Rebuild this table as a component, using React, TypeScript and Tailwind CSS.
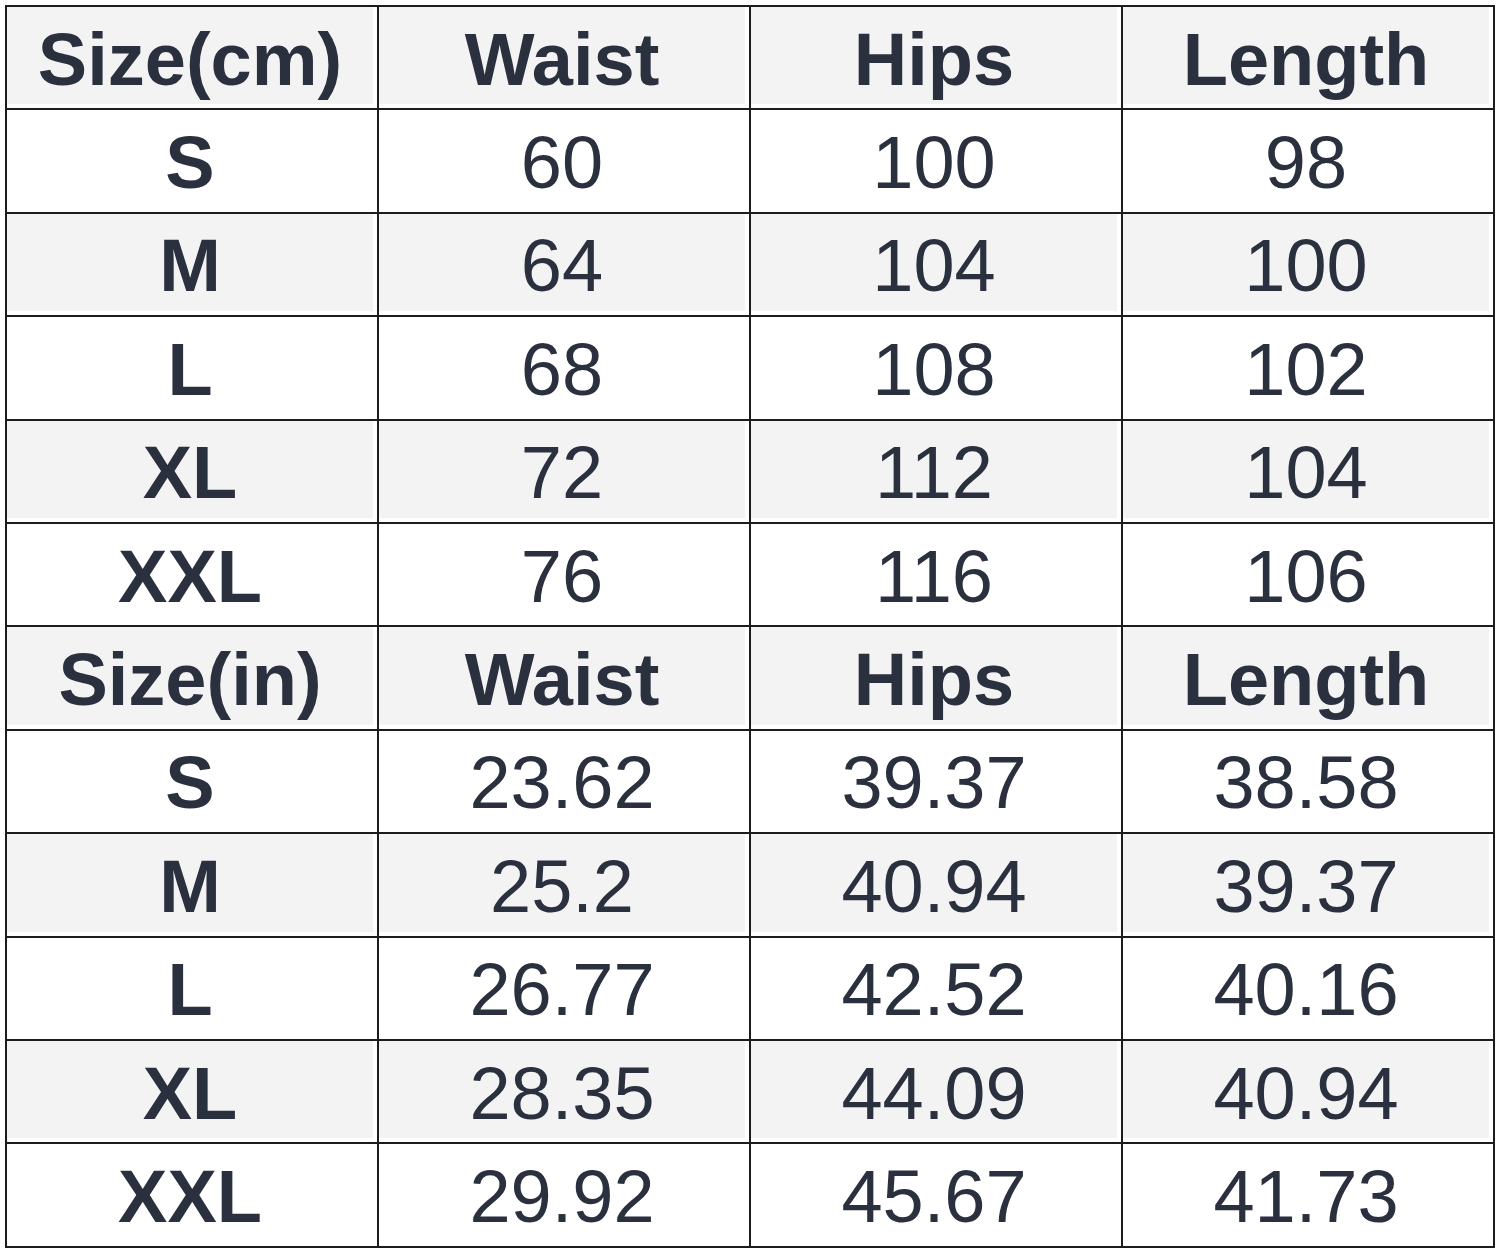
import React from "react";

type Row = { cells: string[]; header?: boolean; gray?: boolean };

const rows: Row[] = [
  { cells: ["Size(cm)", "Waist", "Hips", "Length"], header: true, gray: true },
  { cells: ["S", "60", "100", "98"] },
  { cells: ["M", "64", "104", "100"], gray: true },
  { cells: ["L", "68", "108", "102"] },
  { cells: ["XL", "72", "112", "104"], gray: true },
  { cells: ["XXL", "76", "116", "106"] },
  { cells: ["Size(in)", "Waist", "Hips", "Length"], header: true, gray: true },
  { cells: ["S", "23.62", "39.37", "38.58"] },
  { cells: ["M", "25.2", "40.94", "39.37"], gray: true },
  { cells: ["L", "26.77", "42.52", "40.16"] },
  { cells: ["XL", "28.35", "44.09", "40.94"], gray: true },
  { cells: ["XXL", "29.92", "45.67", "41.73"] },
];

export default function App() {
  return (
    <div className="w-[1500px] h-[1253px] bg-white pt-[5px] pl-[5px] overflow-hidden">
      <div
        className="grid grid-cols-[372px_372px_372px_372px] w-[1490px] border-l-2 border-t-2 border-[#1c1c1c] text-[#2b303f]"
        style={{ fontFamily: '"Liberation Sans", Arial, sans-serif' }}
      >
        {rows.map((row, ri) =>
          row.cells.map((c, ci) => (
            <div
              key={`${ri}-${ci}`}
              className="h-[103.4px] border-r-2 border-b-2 border-[#1c1c1c] pr-[4px] pb-[4px]"
            >
              <div
                className={`h-full w-full flex items-center justify-center text-[74px] leading-none pt-[8px] ${
                  row.gray ? "bg-[#f3f3f3]" : "bg-white"
                } ${row.header || ci === 0 ? "font-bold" : "font-normal"}`}
              >
                {c}
              </div>
            </div>
          ))
        )}
      </div>
    </div>
  );
}
